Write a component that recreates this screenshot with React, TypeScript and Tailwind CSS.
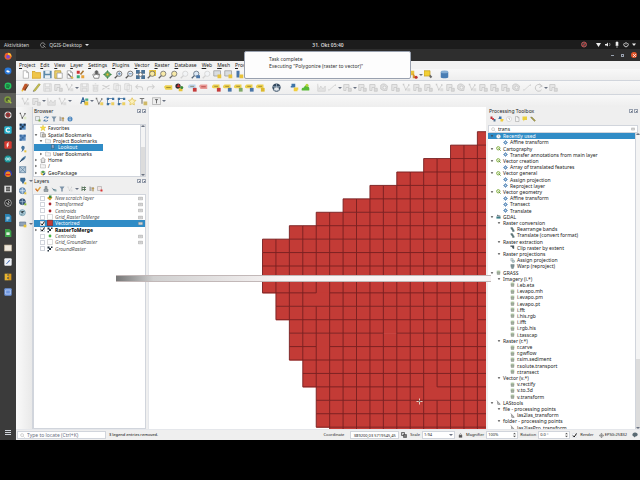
import type { ReactNode } from "react";

const Y = "#e8c33a";
const B = "#4a76a8";
const G = "#d0d0d0";

const page = (fill: string, stroke: string) => (
  <path d="M3 1h4.500l2.500 2.500V11H3zM7.500 1v2.500H10" fill={fill} stroke={stroke} />
);
const lens = (fill: string, stroke: string) => (
  <g stroke={stroke} fill={fill}>
    <circle cx="7" cy="5" r="3.500" />
    <path d="M4.500 7.500 1 11" strokeWidth="1.800" />
  </g>
);
const nodes = (line: string, dot: string) => (
  <g>
    <path d="M2 2l3 7 4-6" fill="none" stroke={line} />
    <path d="M1 1h2v2H1zM4 8h2v2H4zM8 1.500h2v2H8z" fill={line} />
    <path d="M7 7h4v4H7z" fill={dot} />
  </g>
);
const label = (fill: string, badge: string) => (
  <g>
    <path d="M0 4 2 2h8v5H2L0 6z" fill={fill} />
    <path d="M3 4.500h5" stroke="#7a6a30" strokeWidth="0.800" />
    <path d="M6.500 6.500h5v5h-5z" fill={badge} />
  </g>
);
const raster = (a: string, b: string) => (
  <g>
    <path d="M1 1h9v9H1z" fill={a} />
    <path d="M1 1h3v3H1zM7 1h3v3H7zM4 4h3v3H4zM1 7h3v3H1z" fill={b} />
  </g>
);
const tile = (c: string, inner: ReactNode) => (
  <g>
    <rect x="0.500" y="0.500" width="11" height="11" rx="1.500" fill={c} />
    {inner}
  </g>
);

const art: Record<string, ReactNode> = {
  page: page("#fff", "#aaa"),
  folder: <path d="M0 2h4l1 1.500h6.500V11H0z" fill="#efc54b" stroke="#d19c1c" />,
  save: (
    <g>
      <path d="M0.500 1h11v10H.5z" fill="#5b88a8" />
      <path d="M3 1h6v4H3zM2.500 7h7v4h-7z" fill="#e8eef2" />
    </g>
  ),
  layout: (
    <g>
      <path d="M1 1h8v10H1z" fill="#f0d36b" stroke="#b09430" />
      <path d="M4 4h7v7H4z" fill="#fff" stroke="#999" />
    </g>
  ),
  layouts: (
    <g>
      {page("#fff", "#999")}
      <path d="M4 5l6 6" stroke="#777" strokeWidth="2" />
      <path d="M8 9l3 2" stroke={Y} strokeWidth="2" />
    </g>
  ),
  style: (
    <g>
      <path d="M1 1h4v4H1z" fill="#c33" />
      <path d="M1 7h4v4H1z" fill="#3a7" />
      <path d="M10 1 6 6" stroke="#a87532" strokeWidth="2" />
      <path d="M7 7h4v4H7z" fill="#e8a33a" />
    </g>
  ),
  hand: <path d="M3 11 1 6l1-.5L4 7V2h1v4V1h1v5V1h1v5V2h1v5l1-2 1 .5L9 11z" fill="#fff" stroke="#555" strokeWidth="0.900" />,
  pan: (
    <g>
      <path d="M6 0l2 3H4zM6 12 4 9h4zM0 6l3-2v4zM12 6 9 8V4z" fill="#3f8a4b" />
      <path d="M3 3h6v6H3z" fill="#3f8a4b" />
      <path d="M4.500 4.500h3v3h-3z" fill={Y} />
    </g>
  ),
  zin: <g>{lens("#eef4fa", "#555")}<path d="M7 3v4M5 5h4" stroke={B} /></g>,
  zout: <g>{lens("#eef4fa", "#555")}<path d="M5 5h4" stroke={B} /></g>,
  zfull: (
    <g>
      <path d="M0 0h5v5H0zM7 0h5v5H7zM0 7h5v5H0zM7 7h5v5H7z" fill="#4a7296" />
      <circle cx="6" cy="6" r="2.500" fill="#fff" stroke="#555" />
    </g>
  ),
  zsel: <g><path d="M3 0h9v8H3z" fill={Y} />{lens("#f8e9a0", "#666")}</g>,
  zlayer: lens("#f8eaa8", "#666"),
  zlast: lens("#f2f4f6", G),
  znew: <g>{lens("#dbe8f5", "#567")}<path d="M7 7h5v4H7z" fill={B} /></g>,
  tips: <g><path d="M1 1h9v7H1z" fill="#d9dde0" stroke="#999" /><path d="M6 6h5v5H6z" fill={Y} /></g>,
  book: <g><path d="M2 1h4v9H2z" fill={B} /><path d="M6 6h5v5H6z" fill={Y} /></g>,
  temporal: <path d="M1 1h9v9H1zM4 1v9M7 1v9" fill="#eee" stroke="#88a" />,
  selw: <g><path d="M1 1h6v6H1z" fill={Y} /><path d="M5 4l6 7H5z" fill="#d8932a" /><circle cx="9.500" cy="9.500" r="2" fill="#b33" /></g>,
  sely: <g><path d="M0 1h8v7H0z" fill="#f2cf35" stroke="#c49f20" /><path d="M8 6l3 3-2 2-2-2z" fill="#666" /></g>,
  db: <g><path d="M1 2.500v7c0 2 10 2 10 0v-7z" fill="#4a7eb4" /><ellipse cx="6" cy="2.500" rx="5" ry="1.800" fill="#86aed4" /></g>,
  pens: <g><path d="M1 9 5 1h4L6 10z" fill="#c0562a" /><path d="M5 10l5-8" stroke="#6b3a1c" strokeWidth="1.500" /><path d="M1 11l2-2" stroke="#eb3" strokeWidth="2" /></g>,
  pen: <g><path d="M2 10 9 1l2 1-7 9z" fill="#c9c04e" stroke="#8b8a35" strokeWidth="0.700" /><path d="M1 11.500l2-.5-1-1z" fill="#444" /></g>,
  gsave: <path d="M1 1h10v10H1zM3 1v4h6V1M3 11V7h6v4" fill="#e9e9e9" stroke={G} />,
  gpoly: <g><path d="M1 2h7v4H4v4H1z" fill="#e6e6e6" stroke="#c6c6c6" /><path d="M7 7h4v4H7z" fill="#dadada" stroke="#c6c6c6" /></g>,
  gnode: nodes("#cacaca", "#ddd"),
  gtrash: <path d="M2 3h8M3 3v8h6V3M5 1h2M5 5v4M7 5v4" fill="#e9e9e9" stroke={G} />,
  gcut: <path d="M1 3l9 5M1 8l9-5M1 3v1M1 8v1" fill="none" stroke={G} strokeWidth="1.600" />,
  gcopy: <path d="M1 1h6v8H1zM4 3h6v8H4z" fill="#f1f1f1" stroke={G} />,
  gundo: <path d="M4 2 1 5l3 3M1 5h6q4 0 3 5" fill="none" stroke={G} strokeWidth="1.400" />,
  gredo: <path d="M8 2l3 3-3 3M11 5H5q-4 0-3 5" fill="none" stroke={G} strokeWidth="1.400" />,
  gring: <g><path d="M1 3q4-4 9 1l-1 6q-5 1-8-2z" fill="#e0e0e0" stroke="#c4c4c4" /><circle cx="6" cy="6" r="2" fill="#f4f4f4" stroke="#c4c4c4" /></g>,
  gline: <path d="M1 10 10 2M1 10v-2M10 2v2" stroke={G} />,
  gchart: <path d="M1 1v10h10V4L8 8 5 4 3 8" fill="#e2e2e2" stroke={G} />,
  grot: <path d="M10 4A4.500 4.500 0 1 0 10 9M7 1l4 3-4 2" fill="none" stroke="#c6c6c6" strokeWidth="1.300" />,
  lab: <g><path d="M0 5l2-2h9v6H2z" fill="#ecd04c" /><path d="M3 6h6" stroke="#8a7a2a" /></g>,
  diag: <g><circle cx="4" cy="4" r="3.500" fill="#2e2e2e" /><path d="M2 5l3-4 2 5z" fill="#c33" /><path d="M5 7h5v4H5z" fill={Y} /><circle cx="9" cy="6" r="2" fill="#3a8a3a" /></g>,
  run: <g><path d="M1 1h4v5H1z" fill="#b8323a" /><path d="M4 4h4v4H4z" fill="#d9434a" /><path d="M7 6h4v5H7z" fill="#4f6f8f" /></g>,
  labb: label("#b9d2ea", "#c43b3b"),
  labr: <g><path d="M0 4l2-2h9v6H2z" fill="#e89a96" /><path d="M3 5h6" stroke="#a33" /></g>,
  laby1: label("#ecd04c", "#c43b3b"),
  laby2: label("#ecd04c", "#4a76a8"),
  laby3: label("#ecd04c", "#7fa866"),
  laby4: label("#ecd04c", "#dcb92c"),
  globe: <g><circle cx="6" cy="6" r="5.500" fill="#34495e" /><path d="M1 5h10M2 9h8M6 1v10" stroke="#a7b8c9" /><path d="M3 6h6v4H3z" fill="#e4e8ec" /></g>,
  python: <g><path d="M2 1h5v5H1V4h1z" fill="#3f74a8" /><path d="M10 11H5V6h6v3h-1z" fill="#f0cd3e" /></g>,
  cloud: <g><path d="M1 10q-1-4 3-4 1-4 4-2 4 1 3 6z" fill="#58ba37" /><circle cx="8" cy="3" r="2" fill="#b6d63a" /></g>,
  abc: <g><path d="M1 9 4 1l3 8M2.500 6h3" fill="none" stroke="#2e5f96" strokeWidth="1.500" /><path d="M6 6h5v5H6z" fill={Y} /><path d="M7 2h4v3H7z" fill="#4a8" /></g>,
  digi: nodes("#777", "#eccf60"),
  digib: <g><path d="M2 2v7h4M2 2h8" fill="none" stroke="#3e6f9e" /><path d="M1 1h3v3H1zM8 1h3v3H8zM1 8h3v3H1z" fill="#3e6f9e" /><path d="M7 7h4v4H7z" fill="#eccf60" /></g>,
  star: <path d="M5.500 1l1.500 3 3.500.5L8 7l.5 3.500-3-1.500-3 1.500L3 7 .5 4.500 4 4z" fill="#fbf0b8" stroke="#dcbb45" strokeWidth="0.900" />,
  tool: <g><path d="M1 2h6M4 2v7" stroke="#777" strokeWidth="1.400" /><path d="M6 6h5v5H6z" fill="#cfb968" /></g>,
  text: <g><path d="M0.500 1h11v9H.5z" fill="#eee" stroke="#aaa" /><path d="M4 3.500h4M6 3.500v5" stroke="#444" /></g>,
  addv: <g>{nodes("#555", "#dfe9c8")}</g>,
  addr: raster("#4e85bd", "#1d2f45"),
  addr2: raster("#5f8fc3", "#3b6aa0"),
  comma: <g><path d="M5 1q5 0 3 5Q7 9 3 11q3-4 1-5-2-3 1-5z" fill="#46749f" /><path d="M8 8h3v3H8z" fill={Y} /></g>,
  feather: <g><path d="M1 11Q3 4 10 1q1 5-6 8z" fill="#4b7aa4" /><path d="M1 11l6-6" stroke="#234" /></g>,
  mesh: <path d="M1 1h9v9H1zM1 1l9 9M10 1 1 10" fill="#b9cddd" stroke="#567a98" />,
  pg: <g><path d="M2 1h7q2 3-1 6L6 11 4 7Q1 7 2 1z" fill="#3c6a94" /><path d="M8 8h3v3H8z" fill={Y} /></g>,
  wms: <g><circle cx="5" cy="5.500" r="4.500" fill="#7fa6cc" stroke="#3c648c" /><path d="M1 5.500h8M5 1v9" stroke="#e6eff7" /><path d="M8 8h3v3H8z" fill={Y} /></g>,
  wcs: <g><circle cx="5" cy="5.500" r="4.500" fill="#35597d" stroke="#2a4663" /><path d="M1 5.500h8M5 1v9" stroke="#b7cbdf" /><path d="M8 8h3v3H8z" fill="#8b3" /></g>,
  wfs: <g><circle cx="5" cy="5.500" r="4.500" fill="#b7d3df" stroke="#5b8ca0" /><path d="M2 4l3 2 3-3M3 8l4-1" stroke="#467" /></g>,
  virt: <g><path d="M1 3h9v6H1z" fill="#8fa3ba" stroke="#66788d" /><path d="M7 7h4v4H7z" fill={Y} /></g>,
  refresh: <path d="M10 4A4.500 4.500 0 0 0 2 4M2 8a4.500 4.500 0 0 0 8 0M10 1v3H7M2 11V8h3" fill="none" stroke="#3a6ea5" strokeWidth="1.600" />,
  filter: <path d="M1 1h10L7.500 6v5h-3V6z" fill="#7d93a8" />,
  tree: <path d="M2 1v9M2 3h8M2 7h8M7 1v9" stroke="#57735a" strokeWidth="1.800" />,
  up: <g><path d="M2 1v9M2 4h8M2 8h8" stroke="#777" strokeWidth="1.300" /><path d="M8 11V4M6 6l2-3 2 3" stroke="#b98a2c" strokeWidth="1.400" fill="none" /></g>,
  info: <g><circle cx="6" cy="6" r="5" fill="#4d87bf" /><path d="M6 5v4M6 2.500V4" stroke="#fff" strokeWidth="1.600" /></g>,
  addl: <g><path d="M1 1h8v8H1z" fill="#e8eef0" stroke="#888" /><path d="M7 7h4v4H7z" fill="#78ad3f" /></g>,
  brush: <g><path d="M1 5l4 5 6-8" fill="none" stroke="#e0a038" strokeWidth="2.600" /><path d="M2 7l3 3" stroke="#b33" strokeWidth="2" /></g>,
  group: <path d="M2 6h8v5H2zM4 1h4v4H4z" fill="#9aa5ab" stroke="#6a757b" />,
  eye: <g><path d="M1 3l4 3 5 1-4 3z" fill="#5c7c8f" /><path d="M7 7h4v4H7z" fill="#8aa" /></g>,
  remove: <g><path d="M1 1h8v8H1z" fill="#f0e4e4" stroke="#999" /><path d="M7 7h4v4H7z" fill="#d33" /></g>,
  favorite: <path d="M6 0l1.700 4H12L8.500 7 10 11.500 6 9l-4 2.500L3.500 7 0 4h4.300z" fill="#f6dc4a" stroke="#d3b020" strokeWidth="0.600" />,
  bookmark: <g><path d="M1 1h7v9H1z" fill="#e8e8e8" stroke="#888" /><path d="M5 4h6v6H5z" fill="#c9bfae" stroke="#777" /></g>,
  dir: <path d="M1 2h4l1 1.500h5V10H1z" fill="#f3f3f3" stroke="#a9a9a9" />,
  mark: <path d="M3 1h5v9L5.500 8 3 10z" fill="#9ac" stroke="#356" />,
  home: <path d="M1 6l5-5 5 5M2.500 5.500V11h7V5.500" fill="#e4e4e4" stroke="#666" />,
  gpkg: <g><path d="M1 4l5-3 5 3-5 3z" fill="#58a04a" /><path d="M1 5l5 3v3L2 9z" fill="#e0b02c" /><path d="M11 5 6 8v3l4-2z" fill="#2b5a8a" /></g>,
  scratch: <g><path d="M0 6l5-4 6 3-5 6z" fill="#d7a12e" /><path d="M4 1h5v5H4z" fill="#3c8a3c" /></g>,
  red: <circle cx="6" cy="6" r="2.800" fill="#a8242c" />,
  green: <circle cx="6" cy="6" r="2.800" fill="#4bb347" />,
  empty: <path d="M1 1h10v10H1z" fill="#fff" stroke="#b5b5b5" />,
  redbox: <path d="M0.500 .5h11v11H.5z" fill="#c23b36" stroke="#7c1d1d" />,
  rst: <path d="M1 1h4v4H1zM4 4h4v4H4zM8 1h3v3H8zM1 8h3v3H1z" fill="#25323e" />,
  mem: <path d="M1 3h10v6H1zM3 5.500h6" fill="#f3f3f3" stroke="#777" />,
  clock: <g><circle cx="6" cy="6" r="5" fill="#fff" stroke="#bbb" /><path d="M6 3v3l2 1" fill="none" stroke="#777" /></g>,
  q: <g><circle cx="5.500" cy="5.500" r="4" fill="#f7fbe9" stroke="#7ba83a" strokeWidth="2.200" /><path d="M6 6l5 5" stroke="#5f9134" strokeWidth="2.400" /></g>,
  qdock: <g><circle cx="5.500" cy="5.500" r="4" fill="#4d5a35" stroke="#7f9c3c" strokeWidth="2.200" /><path d="M6 6l5 5" stroke="#a8bf4a" strokeWidth="2.200" /></g>,
  gear: <g><path d="M6 0v12M0 6h12M2 2l8 8M10 2l-8 8" stroke="#7da3c8" strokeWidth="2" /><circle cx="6" cy="6" r="3.800" fill="#6d97c2" /><circle cx="6" cy="6" r="1.300" fill="#e6eff8" /></g>,
  gdal: <g><path d="M1 6h10v5H1z" fill="#3c7d86" /><path d="M2 5l2-4 3 3 3-1v3z" fill="#5b6770" /></g>,
  band: <path d="M2 1h4v3H2zM4 4h4v3H4zM6 7h4v4H6z" fill="#6a8589" stroke="#3d5559" strokeWidth="0.800" />,
  clip: <path d="M1 1h9v3H1zM4 4h6v5H7z" fill="#46565e" />,
  warp: <path d="M2 1h8v4L8 11H4L2 5z" fill="#7e9296" stroke="#526468" strokeWidth="0.800" />,
  proj: <g><path d="M2 1h5v6H2z" fill="#d8e0e2" stroke="#879599" /><circle cx="8" cy="8" r="3" fill="#b8ccd0" stroke="#6c8084" /></g>,
  grass: <g><path d="M2 4h8l-1 7H3z" fill="#a3aea0" stroke="#6c7a68" strokeWidth="0.800" /><path d="M6 4V1M4 4 3 1M8 4l1-3" stroke="#7fae66" strokeWidth="1.200" /></g>,
  las: <path d="M2 1l2 3v6M4 4l4 3 2 4H4" fill="#bbb" stroke="#555" />,
  script: page("#f4f4f4", "#999"),
  wrench: <path d="M1 2l3 0 7 7-2 2-6-6z" fill="#a79d4a" stroke="#777548" strokeWidth="0.700" />,
  bulb: <g><path d="M1 1h9v7H5l-2 3V8H1z" fill="#ebcf3e" /></g>,
  search: <g fill="none" stroke="#999"><circle cx="5" cy="5" r="3.500" /><path d="M8 8l3 3" /></g>,
  lock: <g><path d="M2 5h8v6H2z" fill="#555" /><path d="M4 5V3q2-3 4 0v2" fill="none" stroke="#555" strokeWidth="1.300" /></g>,
  msg: <path d="M6 1c7 0 7 8 1 8l-3 2V9C-1 8 0 1 6 1z" fill="#5a6a72" />,
  crs: <g fill="none" stroke="#555"><circle cx="6" cy="6" r="4" /><path d="M6 0v12M0 6h12" /></g>,
  extent: <g><path d="M1 1h6v6H1z" fill="#ccc" stroke="#444" strokeWidth="1.400" /><path d="M5 5h6v6H5z" fill="#777" stroke="#333" /></g>,
  firefox: <g><circle cx="6" cy="6.500" r="5.200" fill="#f0622a" /><circle cx="6" cy="7" r="2.800" fill="#7a4bd0" /><path d="M6 1q6 1 5 7-1-4-5-4z" fill="#fcc634" /></g>,
  thunder: <g><circle cx="6" cy="6" r="5.200" fill="#2a78d8" /><path d="M3 6q3-3 6 1-3 3-6-1z" fill="#fff" /></g>,
  spotify: <g><circle cx="6" cy="6" r="5.200" fill="#23c55e" /><path d="M3 4.500q3-1 6 .5M3.300 6.500q3-1 5 .5M3.600 8.300q2-.7 4 .4" fill="none" stroke="#183b25" /></g>,
  target: <g><circle cx="6" cy="6" r="5.300" fill="#ddd" /><circle cx="6" cy="6" r="3.600" fill="#b33" /><path d="M1 6h10M6 1v10" stroke="#444" /></g>,
  cura: tile("#27b4cf", <path d="M8.500 4A3 3 0 1 0 8.500 8" fill="none" stroke="#fff" strokeWidth="1.800" />),
  fz: tile("#d63a31", <path d="M5 9.500V4q0-1.500 2.500-1M4 6h3.500" fill="none" stroke="#fff" strokeWidth="1.400" />),
  arduino: <g><circle cx="6" cy="6" r="5.300" fill="#17979c" /><path d="M2.500 6a1.500 1.500 0 1 0 3.500 0 1.500 1.500 0 1 1 3.500 0A1.500 1.500 0 1 1 6 6a1.500 1.500 0 1 0-3.500 0" fill="none" stroke="#fff" /></g>,
  audacity: <g><circle cx="6" cy="6" r="4.500" fill="#f08b24" /><path d="M1 8V6a5 5 0 0 1 10 0v2" fill="none" stroke="#2c38b0" strokeWidth="2" /><path d="M3 7h6" stroke="#d22" strokeWidth="2" /></g>,
  film: <g><path d="M0.500 1h11v10H.5z" fill="#e2e2e2" /><path d="M3 2.500h6v3H3zM3 6.500h6v3H3z" fill="#555" /></g>,
  obs: <g><circle cx="6" cy="6" r="5" fill="#1d1d1d" stroke="#ddd" /><path d="M6 3q3 1 1 4M4 5q0 4 4 3" fill="none" stroke="#ddd" strokeWidth="1.300" /></g>,
  writer: <g><path d="M1.500 0H8l3 3v9H1.500z" fill="#2a83b4" /><path d="M3.500 5h5M3.500 7h5M3.500 9h3" stroke="#fff" /></g>,
  calc: <g><path d="M1.500 0H8l3 3v9H1.500z" fill="#3da14a" /><path d="M3.500 5h5v4h-5z" fill="#dff2e0" /></g>,
  files: <path d="M0.500 1.500h11v9H.5z" fill="#eee8de" stroke="#b8a98e" />,
  editor: tile("#eef1f6", <path d="M3 9l5-6 1 1-5 5z" fill="#3562b0" />),
  zip: <g><path d="M1 1h5v10H1z" fill="#e8b530" /><path d="M6 1h5v10H6z" fill="#d6981c" /><path d="M5 2h2v2H5zM5 6h2v3H5z" fill="#555" /></g>,
  shot: tile("#6e97e0", <path d="M2.500 3h7v6h-7z" fill="none" stroke="#c8d9f7" />),
};

function Icon({ k, size = "w-[8px] h-[8px]" }: { k: string; size?: string }) {
  return (
    <svg viewBox="0 0 12 12" className={`${size} shrink-0`} aria-hidden="true">
      {art[k]}
    </svg>
  );
}

function Arrow() {
  return <span className="w-1 shrink-0 h-0 border-x-2 border-t-2 border-x-transparent border-t-gray-500" />;
}

/* "|" is a wide gap, "." a narrow gap, "v" a drop-down arrow, anything else an icon */
function Bar({ items, className }: { items: string; className: string }) {
  return (
    <div role="toolbar" className={`flex items-center overflow-hidden ${className}`}>
      {items.split(" ").map((k, i) =>
        k === "|" ? (
          <span key={i} className="w-[5px] shrink-0" />
        ) : k === "." ? (
          <span key={i} className="w-[2px] shrink-0" />
        ) : k === "v" ? (
          <Arrow key={i} />
        ) : (
          <button key={i} type="button" aria-label={k} className="flex w-[11px] shrink-0 justify-center">
            <Icon k={k} size="w-[9px] h-[9px]" />
          </button>
        )
      )}
    </div>
  );
}

function SmallBar({ items }: { items: string[] }) {
  return (
    <div role="toolbar" className="flex h-2 items-center gap-[2px] px-[2px]">
      {items.map((k, i) =>
        k === "v" ? (
          <Arrow key={i} />
        ) : (
          <button key={i} type="button" aria-label={k}>
            <Icon k={k} size="w-[6px] h-[6px]" />
          </button>
        )
      )}
    </div>
  );
}

function PanelTitle({ children }: { children: ReactNode }) {
  return (
    <h2 className="flex h-[8px] items-center justify-between pl-px leading-[8px]">
      {children}
      <span className="flex gap-px">
        {["Float", "Close"].map((n) => (
          <button key={n} type="button" aria-label={n} className="flex size-[4px] items-center justify-center border border-gray-400">
            <span className="size-px bg-gray-500" />
          </button>
        ))}
      </span>
    </h2>
  );
}

function Chevron({ state }: { state: string }) {
  return (
    <svg viewBox="0 0 6 6" className="h-[4px] w-[4px] shrink-0" aria-hidden="true">
      {state === "o" && <path d="M1 2l2 2.500L5 2z" fill="#444" />}
      {state === "c" && <path d="M2 1l2.500 2L2 5z" fill="#444" />}
    </svg>
  );
}

function Scroll({ thumb }: { thumb: string }) {
  return (
    <div className="flex w-[5px] shrink-0 flex-col items-center border-l border-gray-300 bg-[#dcdcdc]">
      <span className="h-0 border-x-2 border-b-2 border-x-transparent border-b-gray-500" />
      <span className={`w-full bg-[#f4f4f4] ${thumb}`} />
      <span className="mt-auto h-0 border-x-2 border-t-2 border-x-transparent border-t-gray-500" />
    </div>
  );
}

const dock = [
  "firefox", "thunder", "spotify", "qdock", "target", "cura", "fz", "arduino", "audacity",
  "film", "obs", "writer", "calc", "files", "editor", "zip", "shot",
];

const side = ["addv", "addr", "addr2", "comma", "feather", "mesh", "pg", "wms", "wcs", "wfs", "virt"];

const browser: [string, string, string, string][] = [
  ["pl-0", "", "favorite", "Favorites"],
  ["pl-0", "o", "bookmark", "Spatial Bookmarks"],
  ["pl-[5px]", "o", "dir", "Project Bookmarks"],
  ["pl-[10px]", "", "mark", "Lookout"],
  ["pl-[5px]", "c", "dir", "User Bookmarks"],
  ["pl-0", "c", "home", "Home"],
  ["pl-0", "c", "dir", "/"],
  ["pl-0", "c", "gpkg", "GeoPackage"],
];

const layers: [string, string, boolean, boolean][] = [
  ["scratch", "New scratch layer", false, true],
  ["red", "Transformed", false, true],
  ["red", "Centroids", false, true],
  ["empty", "Grid_RasterToMerge", false, true],
  ["redbox", "Vectorized", true, true],
  ["rst", "RasterToMerge", true, false],
  ["green", "Centroids", false, true],
  ["empty", "Grid_GroundRaster", false, true],
  ["rst", "GroundRaster", false, false],
];

/* depth, icon, caption */
const tools: [number, string, string][] = [
  [0, "clock", "Recently used"], [2, "gear", "Affine transform"],
  [0, "q", "Cartography"], [2, "gear", "Transfer annotations from main layer"],
  [0, "q", "Vector creation"], [2, "gear", "Array of translated features"],
  [0, "q", "Vector general"], [2, "gear", "Assign projection"], [2, "gear", "Reproject layer"],
  [0, "q", "Vector geometry"], [2, "gear", "Affine transform"], [2, "gear", "Transect"], [2, "gear", "Translate"],
  [0, "gdal", "GDAL"],
  [1, "", "Raster conversion"], [3, "band", "Rearrange bands"], [3, "band", "Translate (convert format)"],
  [1, "", "Raster extraction"], [3, "clip", "Clip raster by extent"],
  [1, "", "Raster projections"], [3, "proj", "Assign projection"], [3, "warp", "Warp (reproject)"],
  [0, "grass", "GRASS"],
  [1, "", "Imagery (i.*)"], [3, "grass", "i.eb.eta"], [3, "grass", "i.evapo.mh"], [3, "grass", "i.evapo.pm"],
  [3, "grass", "i.evapo.pt"], [3, "grass", "i.fft"], [3, "grass", "i.his.rgb"], [3, "grass", "i.ifft"],
  [3, "grass", "i.rgb.his"], [3, "grass", "i.tasscap"],
  [1, "", "Raster (r.*)"], [3, "grass", "r.carve"], [3, "grass", "r.gwflow"], [3, "grass", "r.sim.sediment"],
  [3, "grass", "r.solute.transport"], [3, "grass", "r.transect"],
  [1, "", "Vector (v.*)"], [3, "grass", "v.rectify"], [3, "grass", "v.to.3d"], [3, "grass", "v.transform"],
  [0, "las", "LAStools"],
  [1, "", "file - processing points"], [3, "las", "las2las_transform"],
  [1, "", "folder - processing points"], [3, "las", "las2lasPro_transform"],
];
const indents = ["pl-[2px]", "pl-[9px]", "pl-[9px]", "pl-[16px]"];

const CELL = 13.43;
const X0 = 113.5;
const Y0 = 24.700;
const firstColumn = [16, 14, 12, 10, 8, 6, 4, 2, 0, 0, 0, 0, 1, 1, 2, 2, 2, 3, 3, 4, 4, 4, 5];
const missingTop = ["12-4", "16-4", "15-9", "14-15", "19-12"];
const missingLeft = ["12-4", "19-13"];

function MapCanvas() {
  const fills: ReactNode[] = [];
  let d = "";
  firstColumn.forEach((first, r) => {
    const y = Y0 + r * CELL;
    fills.push(<rect key={r} x={X0 + first * CELL} y={y} width={400} height={CELL + 0.5} />);
    for (let c = first; c < 17; c++) {
      const x = X0 + c * CELL;
      if (!missingTop.includes(`${r}-${c}`)) d += `M${x} ${y}h${CELL}`;
      if (!missingLeft.includes(`${r}-${c}`)) d += `M${x} ${y}v${CELL}`;
    }
    const next = firstColumn[r + 1];
    if (next > first) d += `M${X0 + first * CELL} ${y + CELL}H${X0 + next * CELL}`;
  });
  return (
    <svg viewBox="0 0 337 322" preserveAspectRatio="xMinYMin slice" className="h-full w-full" role="img" aria-label="Map canvas">
      <g fill="#c33b36">{fills}</g>
      <path d={d} stroke="#761f20" strokeWidth="0.900" fill="none" />
      <path d="M267.500 294.500h6M270.500 291.500v6" stroke="#e8d2c4" strokeWidth="1" />
      <path d="M269.500 293.500h2v1h-2z" fill="#333" />
    </svg>
  );
}

function Spin({ id, value }: { id: string; value: string }) {
  return (
    <span className="flex h-[8px] w-[32px] items-center border border-gray-300 bg-white pr-px">
      <input id={id} defaultValue={value} className="w-0 min-w-0 grow bg-transparent pl-px outline-none" />
      <svg viewBox="0 0 4 6" className="h-[6px] w-[3px]" aria-hidden="true">
        <path d="M0 2l2-2 2 2zM0 4l2 2 2-2z" fill="#555" />
      </svg>
    </span>
  );
}

export default function App() {
  return (
    <div className="flex h-screen flex-col overflow-hidden bg-black py-10 font-['Noto_Sans','Liberation_Sans',sans-serif] text-[5px] leading-[6px] text-[#222]">
      <div className="relative flex min-h-0 flex-1 flex-col">
        <header className="grid h-[9px] shrink-0 grid-cols-3 items-center bg-[#1c1c1c] px-1 text-[#d8d8d8]">
          <div className="flex items-center gap-[11px]">
            <button type="button">Aktivitäten</button>
            <button type="button" className="flex items-center gap-[3px]">
              <svg viewBox="0 0 12 12" className="size-[6px]" aria-hidden="true">
                <path d="M9 9A4.500 4.500 0 1 1 10 6M6 6l5 5" fill="none" stroke="#aaa" strokeWidth="1.500" />
              </svg>
              QGIS-Desktop
              <span className="h-0 border-x-2 border-t-2 border-x-transparent border-t-gray-200" />
            </button>
          </div>
          <time className="pl-4 text-center font-semibold">31. Okt 05:40</time>
          <svg viewBox="0 0 56 9" className="h-[9px] w-[56px] justify-self-end" role="img" aria-label="System status">
            <circle cx="4" cy="4.500" r="2.500" fill="#444" stroke="#b55" />
            <path d="M2.500 6l3-3" stroke="#e33" />
            <path d="M16 3h5l-2.500 4z" fill="#eee" />
            <path d="M25 4h1.500L28 2.500v4L26.500 5.500H25z" fill="#eee" />
            <path d="M29.500 3q1 1.500 0 3" stroke="#bbb" fill="none" strokeWidth="0.700" />
            <path d="M36 2h2v3h-2zM35.500 5.500h3M37 5v3" fill="#eee" stroke="#eee" strokeWidth="0.600" />
            <path d="M44.500 3a2.200 2.200 0 1 0 3 0M46 2v2.500" fill="none" stroke="#ccc" />
            <path d="M52 3.500h4l-2 2.500z" fill="#eee" />
          </svg>
        </header>

        <div className="flex min-h-0 flex-1">
          <nav className="flex w-4 shrink-0 flex-col justify-between bg-[#3b3b3b] pb-[5px]">
            <div className="grid h-[250px] auto-rows-fr">
              {dock.map((k) => (
                <button key={k} type="button" aria-label={k} className={`flex items-center justify-center ${k === "qdock" ? "bg-[#5c5d58]" : ""}`}>
                  <Icon k={k} />
                </button>
              ))}
            </div>
            <button type="button" aria-label="Applications" className="flex flex-col items-center gap-px">
              <span className="h-px w-[6px] bg-gray-300" />
              <span className="h-px w-[6px] bg-gray-300" />
              <span className="h-px w-[6px] bg-gray-300" />
            </button>
          </nav>

          <main className="flex min-w-0 flex-1 flex-col bg-[#efefef]">
            <div className="flex h-[12px] shrink-0 items-center justify-end gap-[7px] bg-[#2e2e2e] px-[3px]">
              <button type="button" aria-label="Minimize" className="h-px w-[3px] bg-gray-400" />
              <button type="button" aria-label="Restore" className="size-[3px] border border-gray-400" />
              <button type="button" aria-label="Close" className="flex size-[6px] items-center justify-center rounded-full bg-[#e2562b]">
                <svg viewBox="0 0 4 4" className="size-[3px]" aria-hidden="true"><path d="M0 0l4 4M4 0 0 4" stroke="#fff" /></svg>
              </button>
            </div>
            <div role="menubar" className="flex h-[8px] shrink-0 items-center gap-[5px] bg-[#f2f2f2] px-[3px]">
              {["Project", "Edit", "View", "Layer", "Settings", "Plugins", "Vector", "Raster", "Database", "Web", "Mesh", "Processing"].map((m) => (
                <button key={m} type="button" role="menuitem" className="first-letter:underline">{m}</button>
              ))}
            </div>
            <Bar
              className="h-[12px] shrink-0 border-b border-gray-300 bg-gradient-to-b from-[#f8f8f8] to-[#eeeeee] pl-1"
              items="page folder save layout layouts style | hand pan zin zout zfull zsel zlayer zlayer zlast znew zlast tips tips book temporal | | refresh clock gear mesh tool text layout lab info tips book page | | selw v sely | db"
            />
            <Bar
              className="h-[14px] shrink-0 border-b border-gray-300 bg-gradient-to-b from-[#f8f8f8] to-[#eeeeee] pl-1"
              items="pens pen gsave gpoly gnode v gsave gtrash gcut gcopy gcopy gundo gredo | . lab diag . labb labr . laby1 laby2 laby3 laby2 laby4 | globe | . python cloud | gchart gline v gpoly v gpoly gpoly gring gpoly gnode gpoly gpoly gnode gpoly gring gnode gpoly gpoly gpoly gring gline grot v gpoly"
            />
            <Bar
              className="h-[12px] shrink-0 bg-gradient-to-b from-[#f8f8f8] to-[#eeeeee] pl-1"
              items="gnode gpoly v gchart gnode v | . abc v digi digib digib star tool . text v"
            />

            <div className="flex min-h-0 flex-1">
              <div role="toolbar" className="w-[17px] shrink-0 border-r border-gray-300 bg-gradient-to-r from-[#fafafa] to-[#e9e9e9] pt-1">
                <div className="grid h-[118px] auto-rows-fr">
                  {side.map((k) => (
                    <button key={k} type="button" aria-label={k} className="flex items-center gap-[2px] pl-[3px]">
                      <Icon k={k} />
                      {(k === "pg" || k === "virt") && <Arrow />}
                    </button>
                  ))}
                </div>
              </div>

              <aside className="flex w-[114px] shrink-0 flex-col pr-px">
                <section className="flex flex-col">
                  <PanelTitle>Browser</PanelTitle>
                  <div className="pb-px"><SmallBar items={["addl", "refresh", "filter", "up", "info"]} /></div>
                  <div className="flex h-[53px] border border-gray-300 bg-white">
                    <ul className="grid min-w-0 flex-1 auto-rows-fr">
                      {browser.map(([pad, state, icon, name]) => (
                        <li key={name} className={`flex items-center gap-[2px] ${pad} ${name === "Lookout" ? "mr-[37px] bg-[#308cc6] text-white" : ""}`}>
                          <Chevron state={state} />
                          <Icon k={icon} size="w-[6px] h-[6px]" />
                          {name}
                        </li>
                      ))}
                    </ul>
                    <Scroll thumb="h-[20px]" />
                  </div>
                </section>
                <section className="flex min-h-0 flex-1 flex-col">
                  <PanelTitle>Layers</PanelTitle>
                  <div className="pb-px"><SmallBar items={["brush", "group", "eye", "filter", "gnode", "v", "tree", "up", "remove"]} /></div>
                  <div className="flex-1 border border-gray-300 bg-white">
                    <ul className="grid h-[57px] auto-rows-fr">
                      {layers.map(([icon, name, on, mem], i) => (
                        <li key={i} className={`flex items-center gap-[2px] pr-[2px] ${icon === "redbox" ? "bg-[#308cc6] text-white" : on ? "font-bold text-black" : "italic text-[#555]"}`}>
                          <Chevron state={name === "RasterToMerge" ? "c" : ""} />
                          <label className="flex flex-1 items-center gap-[2px]">
                            <span className="relative flex size-[5px]">
                              <input type="checkbox" defaultChecked={on} className="peer size-[5px] appearance-none border border-gray-300 bg-white" />
                              <svg viewBox="0 0 5 5" className="pointer-events-none absolute inset-0 hidden size-[5px] peer-checked:block" aria-hidden="true">
                                <path d="M1 2.500 2.200 4 4.500 .5" fill="none" stroke="#111" />
                              </svg>
                            </span>
                            <Icon k={icon} size="w-[6px] h-[6px]" />
                            {name}
                          </label>
                          {mem && <Icon k="mem" size="w-[5px] h-[5px]" />}
                        </li>
                      ))}
                    </ul>
                  </div>
                </section>
              </aside>

              <div className="ml-px min-w-0 flex-1 overflow-hidden border-l border-gray-200 bg-white">
                <MapCanvas />
              </div>

              <aside className="ml-[2px] flex w-[152px] shrink-0 flex-col">
                <div className="pr-[2px]"><PanelTitle>Processing Toolbox</PanelTitle></div>
                <SmallBar items={["run", "python", "clock", "script", "bulb", "wrench"]} />
                <div className="mt-[2px] mr-[2px] flex h-[8px] shrink-0 items-center gap-[2px] border border-gray-300 bg-white px-[2px]">
                  <Icon k="search" size="w-[5px] h-[5px]" />
                  <input aria-label="Search tools" defaultValue="trans" className="w-0 min-w-0 grow outline-none" />
                  <Icon k="mem" size="w-[4px] h-[4px]" />
                </div>
                <div className="flex min-h-0 flex-1 overflow-hidden bg-white">
                  <ul className="-mb-[2px] flex min-w-0 flex-1 flex-col">
                    {tools.map(([depth, icon, name], i) => (
                      <li key={i} className={`flex min-h-0 flex-1 items-center gap-[2px] whitespace-nowrap leading-[6px] ${indents[depth]} ${i === 0 ? "bg-[#308cc6] text-white" : ""}`}>
                        <Chevron state={depth < 2 ? "o" : ""} />
                        {icon && <Icon k={icon} size="w-[5px] h-[5px]" />}
                        {name}
                      </li>
                    ))}
                  </ul>
                  <Scroll thumb="h-[224px]" />
                </div>
              </aside>
            </div>

            <footer className="flex h-[11px] shrink-0 items-center gap-[2px] border-t border-gray-200 bg-[#efefef] px-px text-[4px]">
              <div className="flex h-[8px] w-[89px] items-center gap-[2px] border border-gray-300 bg-white px-[2px] text-[5px]">
                <Icon k="search" size="w-[5px] h-[5px]" />
                <input aria-label="Locate" placeholder="Type to locate (Ctrl+K)" className="w-0 min-w-0 grow outline-none placeholder:text-gray-500" />
              </div>
              <span className="flex-1 pl-px text-black">3 legend entries removed.</span>
              <label htmlFor="coord" className="pr-[4px]">Coordinate</label>
              <input id="coord" defaultValue="389200,03 5719545,45" className="h-[8px] w-[49px] border border-gray-300 bg-white px-px text-center" />
              <Icon k="extent" size="w-[6px] h-[6px]" />
              <label htmlFor="scale" className="pl-px">Scale</label>
              <span className="flex h-[8px] w-[33px] items-center border border-gray-300 bg-white pr-px">
                <select id="scale" className="min-w-0 grow appearance-none bg-transparent pl-px outline-none"><option>1:94</option></select>
                <Arrow />
              </span>
              <span className="px-px"><Icon k="lock" size="w-[5px] h-[5px]" /></span>
              <label htmlFor="mag">Magnifier</label>
              <Spin id="mag" value="100%" />
              <label htmlFor="rot">Rotation</label>
              <Spin id="rot" value="0.0 °" />
              <label className="flex items-center gap-[3px]">
                <span className="relative flex size-[5px]">
                  <input type="checkbox" defaultChecked className="size-[5px] appearance-none border border-gray-200 bg-white" />
                  <svg viewBox="0 0 5 5" className="pointer-events-none absolute inset-0 size-[5px]" aria-hidden="true">
                    <path d="M1 2.500 2.200 4 4.500 .5" fill="none" stroke="#111" />
                  </svg>
                </span>
                Render
              </label>
              <button type="button" className="ml-[3px] flex items-center gap-px">
                <Icon k="crs" size="w-[5px] h-[5px]" />
                EPSG:25832
              </button>
              <button type="button" aria-label="Messages" className="mr-px ml-[3px]"><Icon k="msg" size="w-[6px] h-[6px]" /></button>
            </footer>
          </main>
        </div>

        <div role="status" className="absolute top-[11px] left-1/2 ml-[-76px] h-[28px] w-[167px] rounded-[2px] border border-gray-400 bg-[#fdfdfd] pt-[4px] pl-[24px] leading-[7px] text-[#333]">
          <p>Task complete</p>
          <p>Executing "Polygonize (raster to vector)"</p>
        </div>
        <div className="absolute top-[235px] right-[149px] left-[116px] h-[7px] border-y border-[#c2b8b8] bg-gradient-to-r from-[#777777] via-[#d0d0d0] via-10% to-[#f8f4f4] to-45%" />
      </div>
    </div>
  );
}
